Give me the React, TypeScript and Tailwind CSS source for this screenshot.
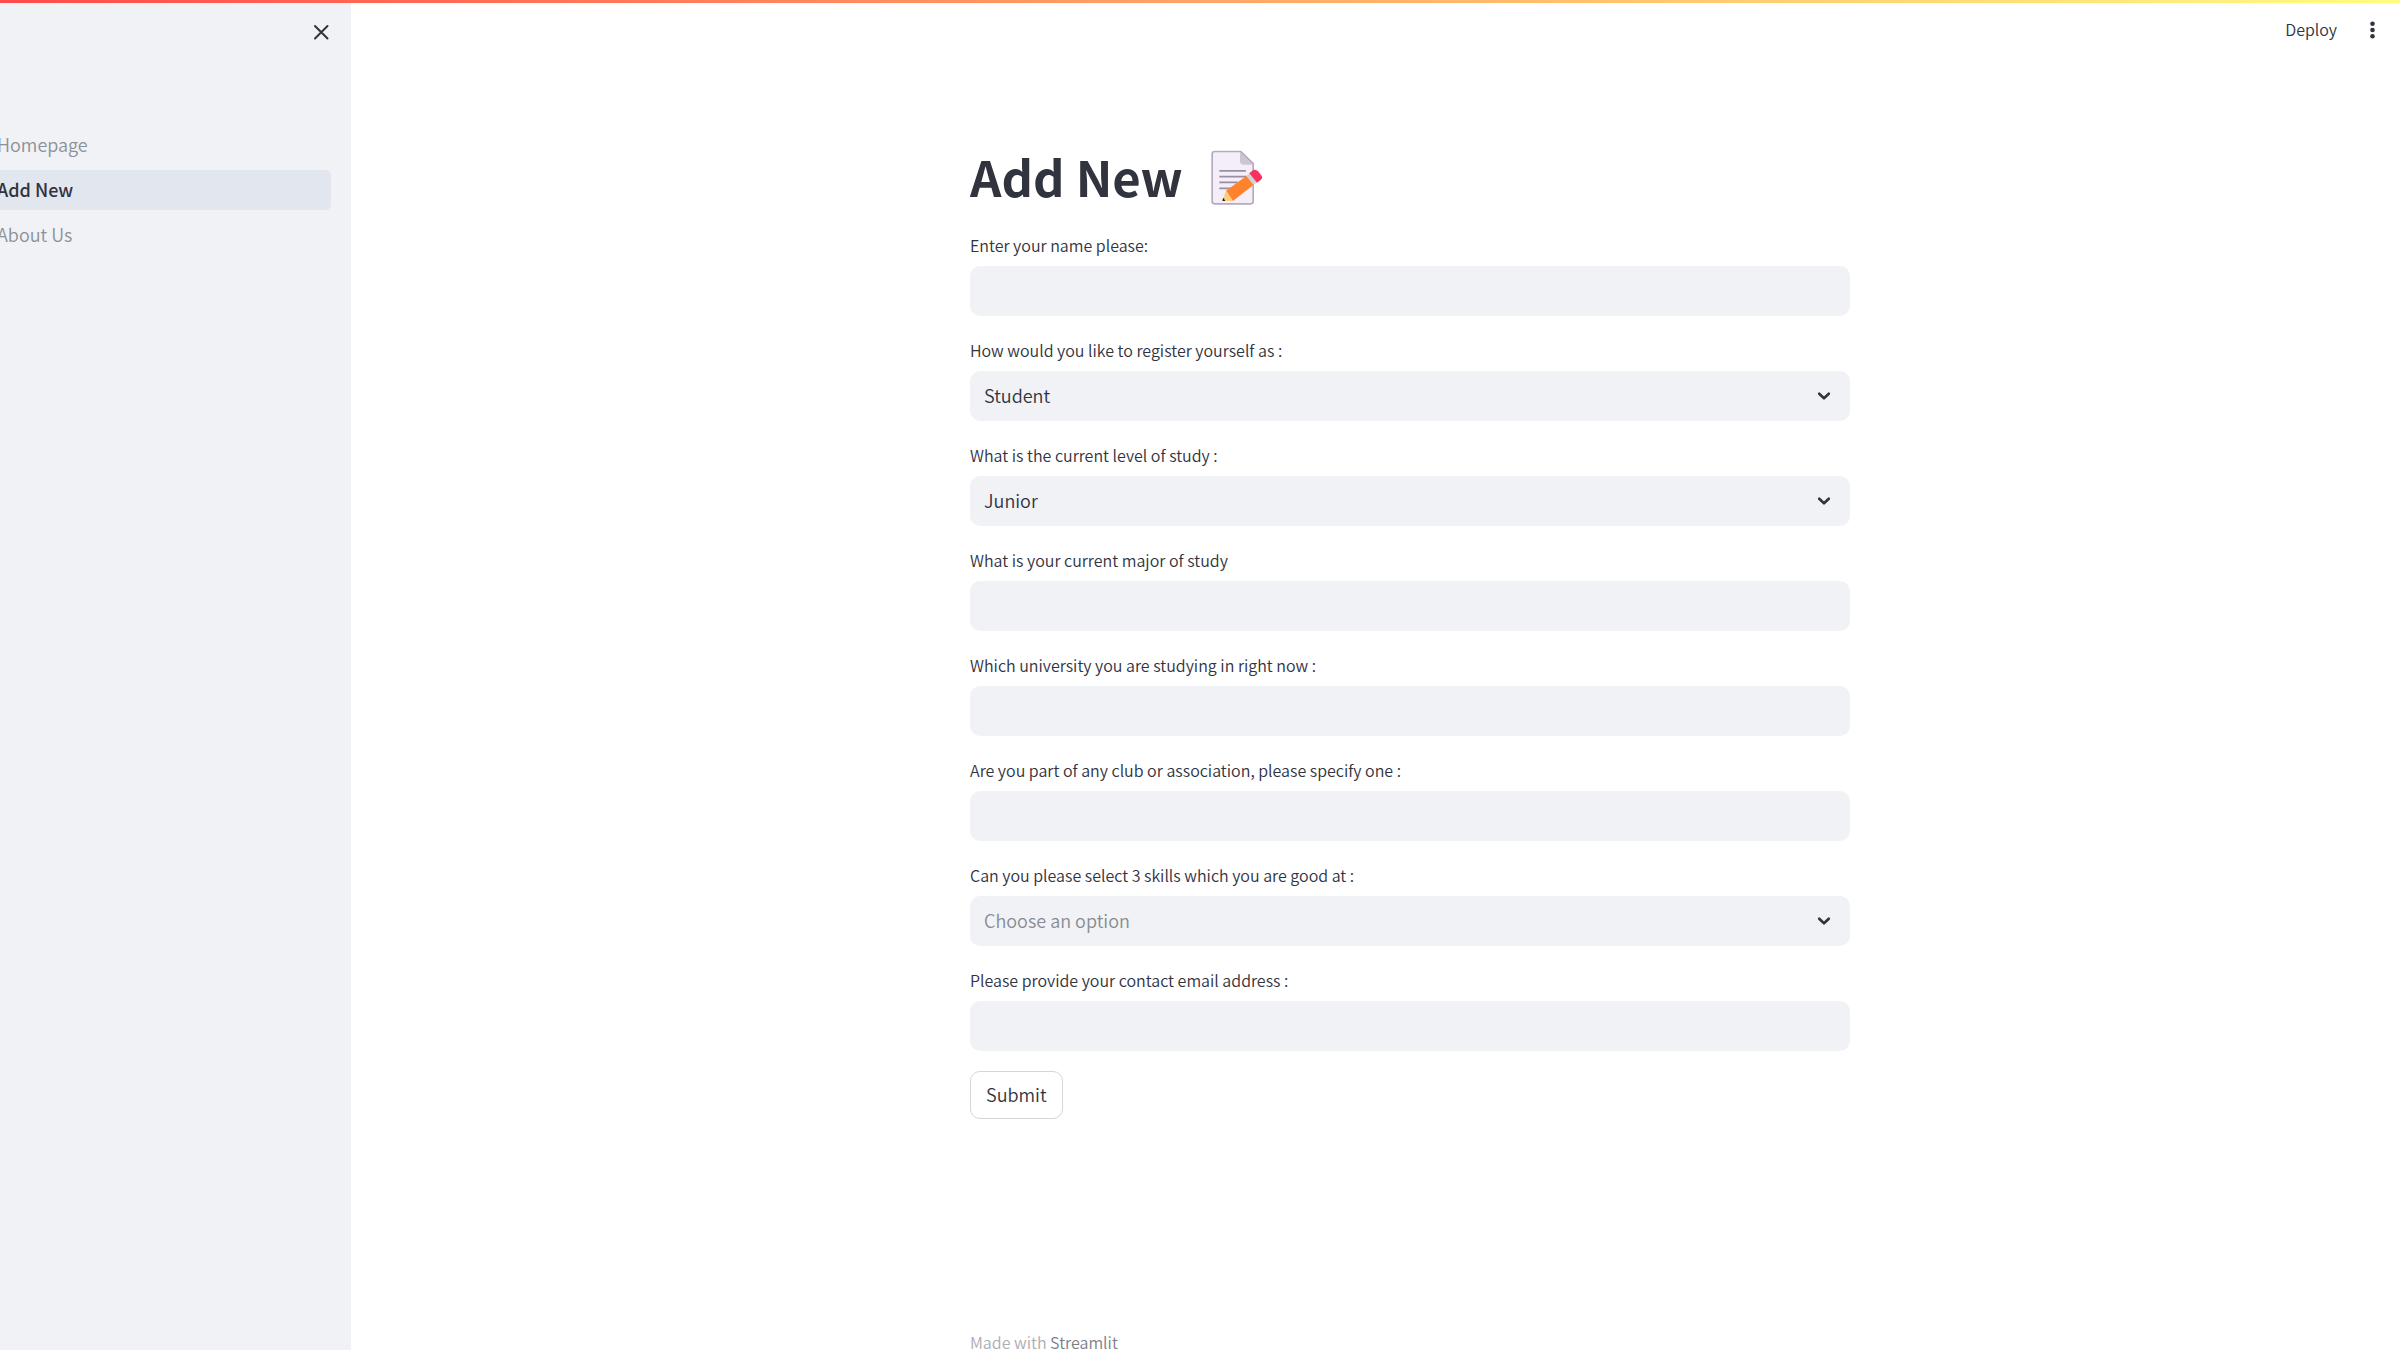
import React from "react";

type Field = {
  id: string;
  label: string;
  kind: "text" | "select";
  options?: string[];
  placeholder?: boolean;
};

const fields: Field[] = [
  { id: "name", label: "Enter your name please:", kind: "text" },
  { id: "role", label: "How would you like to register yourself as :", kind: "select", options: ["Student"] },
  { id: "level", label: "What is the current level of study :", kind: "select", options: ["Junior"] },
  { id: "major", label: "What is your current major of study", kind: "text" },
  { id: "university", label: "Which university you are studying in right now :", kind: "text" },
  { id: "club", label: "Are you part of any club or association, please specify one :", kind: "text" },
  {
    id: "skills",
    label: "Can you please select 3 skills which you are good at :",
    kind: "select",
    options: ["Choose an option"],
    placeholder: true,
  },
  { id: "email", label: "Please provide your contact email address :", kind: "text" },
];

const pages = [
  { name: "Homepage", active: false },
  { name: "Add New", active: true },
  { name: "About Us", active: false },
];

function MemoIcon() {
  return (
    <svg viewBox="60 30 156 165" className="mt-0.5 h-[55px] w-[52px]" role="img" aria-label="Memo">
      <path
        d="M70 34.5H149L186.500 71V184Q186.500 191.500 179 191.500H71Q63.500 191.500 63.500 184V42Q63.500 34.500 71 34.500Z"
        fill="#f3eef8"
        stroke="#b4acbc"
        strokeWidth="5"
        strokeLinejoin="round"
      />
      <path d="M147 36L186 74H157Q147 74 147 64Z" fill="#cdc4d6" />
      <path d="M149 34.500L186.500 71" stroke="#b4acbc" strokeWidth="4" />
      <path d="M85 92.500H165M85 110H165M85 127H140M85 145H120" stroke="#998ea4" strokeWidth="5" />
      <path d="M105 152L167 107L188 134L126 183Z" fill="#ff822d" />
      <path d="M105 152L126 183H97L95 181Z" fill="#ffce7c" />
      <path d="M97 173.500L103 183H95Q94 182 94.500 180Z" fill="#212121" />
      <path d="M166 107L175 100L198 127L188 135Z" fill="#d3d3d3" />
      <path d="M175 100L184 92Q193 86 201 94L210 105Q217 114 209 120L198 128Z" fill="#f92f60" />
    </svg>
  );
}

function Chevron() {
  return (
    <svg
      viewBox="0 0 14 14"
      className="pointer-events-none absolute right-[19px] top-[18px] size-[14px]"
      fill="none"
      stroke="#31333f"
      strokeWidth="2.6"
      strokeLinecap="round"
      strokeLinejoin="round"
      aria-hidden="true"
    >
      <path d="M2.200 4.700L7 9.300L11.800 4.700" />
    </svg>
  );
}

function FormField({ field }: { field: Field }) {
  return (
    <div className="flex flex-col gap-[7px]">
      <label htmlFor={field.id} className="text-[16px] leading-[28px]">
        {field.label}
      </label>
      {field.kind === "text" ? (
        <input id={field.id} type="text" className="h-[50px] w-full rounded-[10px] bg-[#f0f2f6] px-3.5 text-[18px] outline-none" />
      ) : (
        <div className="relative">
          <select
            id={field.id}
            className={
              "block h-[50px] w-full appearance-none rounded-[10px] bg-[#f0f2f6] pb-0.5 pl-3.5 pr-12 text-[18px] outline-none " +
              (field.placeholder ? "text-[#898b93]" : "text-[#31333f]")
            }
          >
            {field.options?.map((o) => (
              <option key={o}>{o}</option>
            ))}
          </select>
          <Chevron />
        </div>
      )}
    </div>
  );
}

export default function App() {
  return (
    <div className="flex min-h-screen flex-col bg-white font-['Noto_Sans_CJK_JP','Noto_Sans_CJK_SC',sans-serif] font-[350] text-[#31333f]">
      <div className="h-[3px] bg-linear-to-r/srgb from-[#ff4b4b] to-[#fffd80]" />
      <div className="flex flex-1">
        <aside className="w-[351px] shrink-0 overflow-hidden bg-[#f0f2f6]">
          <div className="flex justify-end px-5 pt-[19px]">
            <button type="button" aria-label="Close sidebar" className="size-5">
              <svg viewBox="0 0 20 20" className="size-5" fill="none" stroke="#31333f" strokeWidth="2" strokeLinecap="round">
                <path d="M4 4L16.500 16.500M16.500 4L4 16.500" />
              </svg>
            </button>
          </div>
          <nav className="-ml-[13px] mr-5 mt-[83px] flex flex-col gap-[5px]">
            {pages.map((p) => (
              <a
                key={p.name}
                href="#"
                aria-current={p.active ? "page" : undefined}
                className={
                  "flex h-10 items-center rounded-[5px] px-2.5 pb-0.5 text-[18px] " +
                  (p.active ? "bg-[#e2e6ee] font-medium" : "text-[#8e9099]")
                }
              >
                {p.name}
              </a>
            ))}
          </nav>
        </aside>
        <div className="flex min-w-0 flex-1 flex-col">
          <header className="flex h-[54px] items-center justify-end gap-[25px] pr-[18px]">
            <button type="button" className="pb-0.5 text-[16px]">
              Deploy
            </button>
            <button type="button" aria-label="Main menu">
              <svg viewBox="0 0 20 20" className="size-5" fill="#31333f">
                <circle cx="10.500" cy="3.800" r="2.300" />
                <circle cx="10.500" cy="10" r="2.300" />
                <circle cx="10.500" cy="16.200" r="2.300" />
              </svg>
            </button>
          </header>
          <main className="flex flex-1 flex-col pl-[69px]">
            <div className="mx-auto flex w-full max-w-[880px] flex-1 flex-col">
              <h1 className="mt-[85px] flex h-[68px] items-center gap-[28px] text-[49px] font-bold">
                Add New
                <MemoIcon />
              </h1>
              <form className="mt-[21px] flex flex-col gap-5" onSubmit={(e) => e.preventDefault()}>
                {fields.map((f) => (
                  <FormField key={f.id} field={f} />
                ))}
                <button type="submit" className="h-12 self-start rounded-[10px] border border-[#d6d6d9] px-[15px] pb-0.5 text-[18px]">
                  Submit
                </button>
              </form>
              <footer className="mt-auto text-[16px] leading-[16px] text-[#acadb3]">
                Made with{" "}
                <a href="#" className="text-[#7c7e86]">
                  Streamlit
                </a>
              </footer>
            </div>
          </main>
        </div>
      </div>
    </div>
  );
}
